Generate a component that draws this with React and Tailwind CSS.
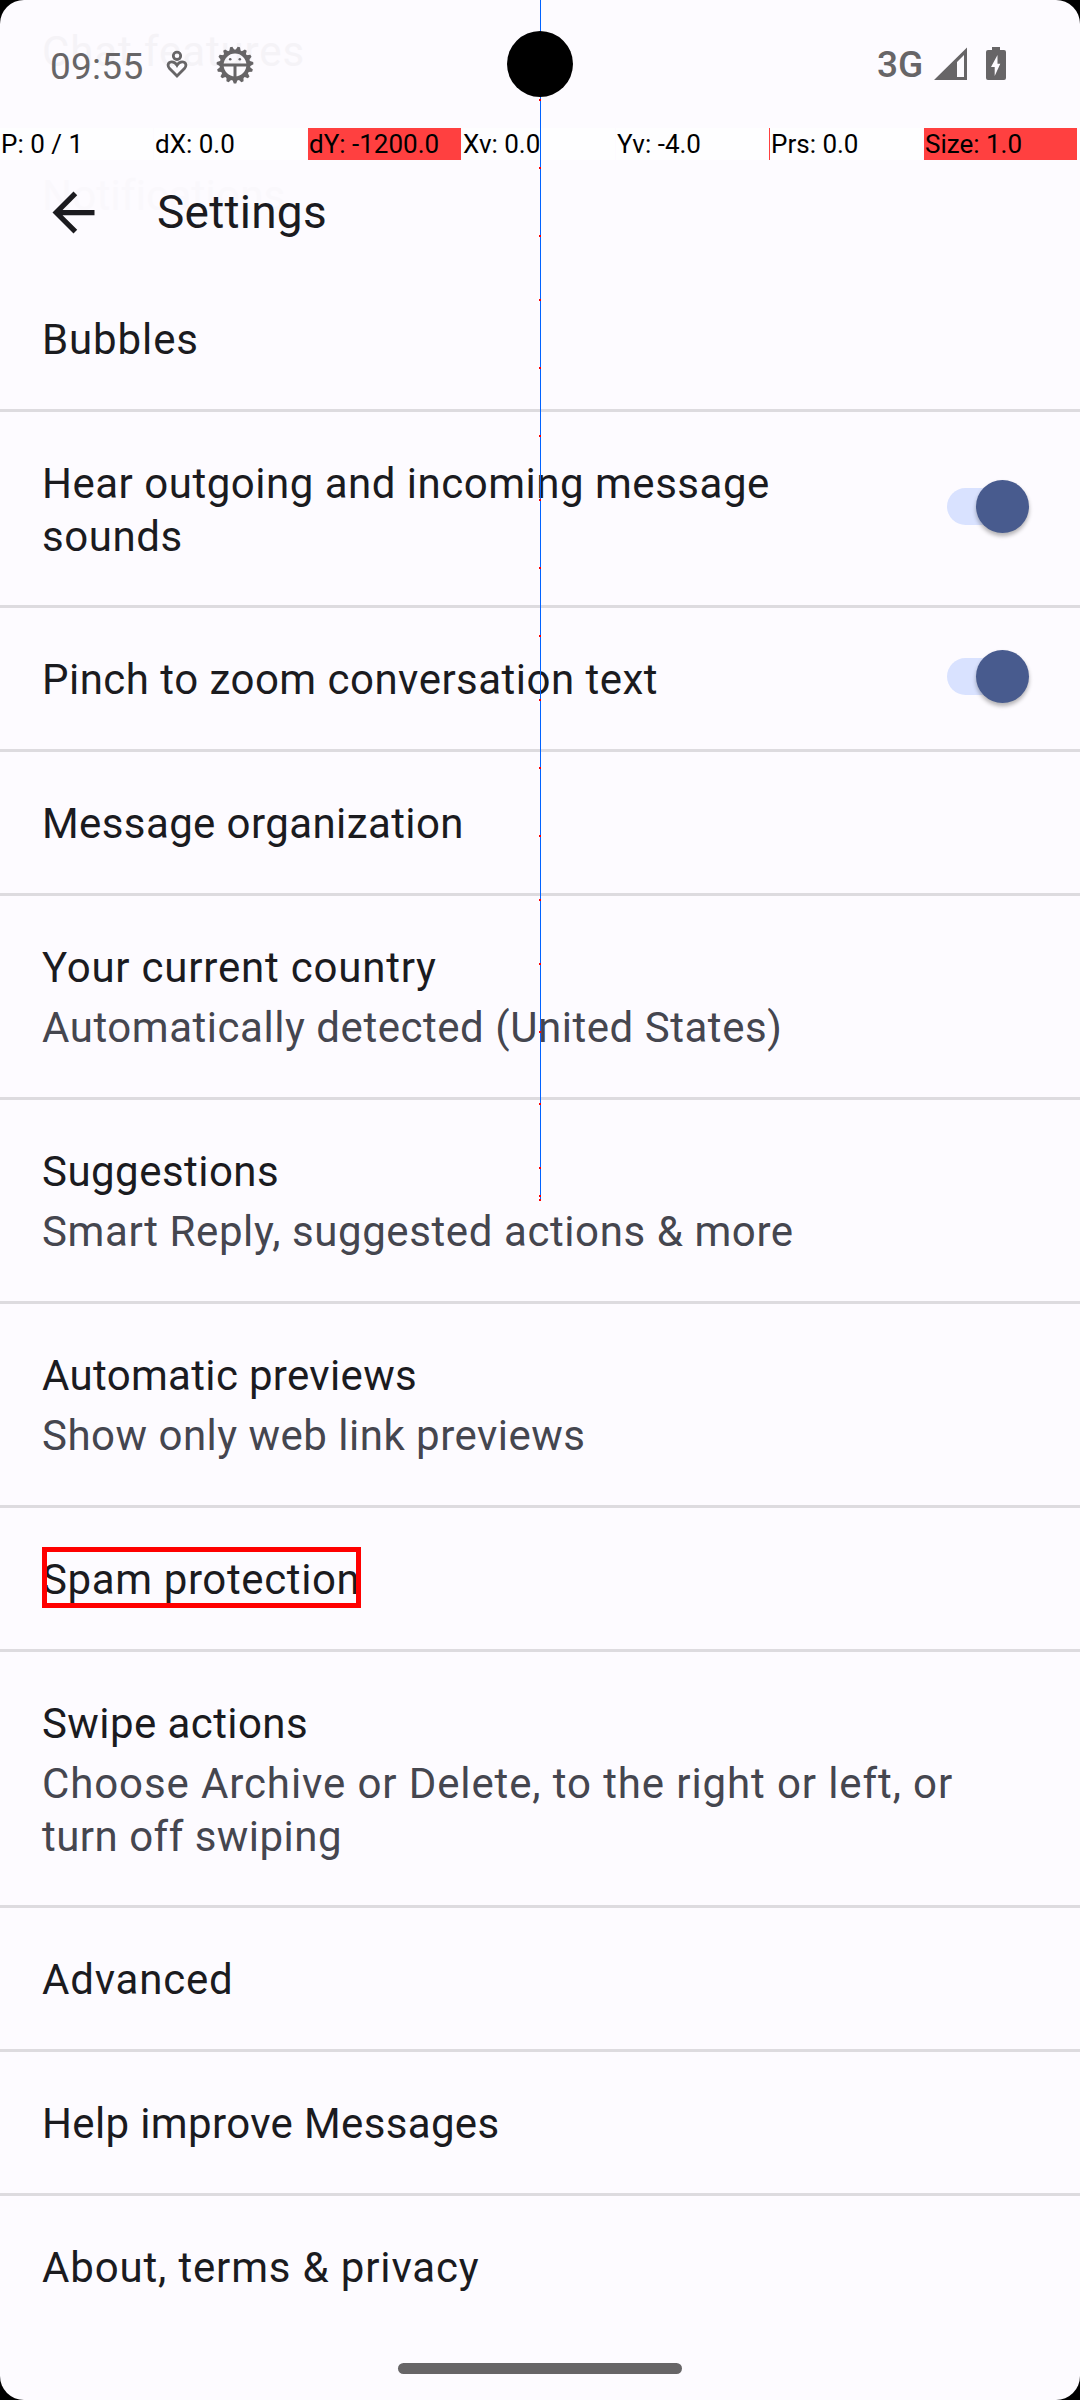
import React from "react";

const rows = [
  { lines: [["Bubbles", "tracking-[0.9px]"]], height: "h-[144px]" },
  {
    lines: [["Hear outgoing and incoming message", "tracking-[0.51px]"], ["sounds", "tracking-[0.57px]"]],
    height: "h-[196px]",
    toggle: "mt-[68px]",
  },
  { lines: [["Pinch to zoom conversation text", "tracking-[0.48px]"]], height: "h-[144px]", toggle: "mt-[42px]" },
  { lines: [["Message organization", "tracking-[0.4px]"]], height: "h-[144px]" },
  {
    lines: [["Your current country", "tracking-[0.79px]"]],
    sub: [["Automatically detected (United States)", "tracking-[0.54px]"]],
    height: "h-[204px]",
  },
  {
    lines: [["Suggestions", "tracking-[0.47px]"]],
    sub: [["Smart Reply, suggested actions & more", "tracking-[0.59px]"]],
    height: "h-[204px]",
  },
  {
    lines: [["Automatic previews", "tracking-[0.33px]"]],
    sub: [["Show only web link previews", "tracking-[0.49px]"]],
    height: "h-[204px]",
  },
  { lines: [["Spam protection", "tracking-[0.62px]"]], height: "h-[144px]", highlight: true },
  {
    lines: [["Swipe actions", "tracking-[0.42px]"]],
    sub: [
      ["Choose Archive or Delete, to the right or left, or", "tracking-[0.89px]"],
      ["turn off swiping", "tracking-[0.48px]"],
    ],
    height: "h-[256px]",
  },
  { lines: [["Advanced", "tracking-[0.8px]"]], height: "h-[144px]" },
  { lines: [["Help improve Messages", "tracking-[0.36px]"]], height: "h-[144px]" },
  { lines: [["About, terms & privacy", "tracking-[0.84px]"]], height: "h-[144px]", last: true },
];

const pointerCells = [
  { text: "P: 0 / 1" },
  { text: "dX: 0.0" },
  { text: "dY: -1200.0", active: true },
  { text: "Xv: 0.0" },
  { text: "Yv: -4.0" },
  { text: "Prs: 0.0", tick: true },
  { text: "Size: 1.0", active: true },
];

const samples = [100, 168, 236, 300, 368, 436, 500, 568, 636, 700, 768, 836, 900, 964, 1032, 1104, 1168, 1196, 1200];

function Switch({ className }) {
  return (
    <div className={`relative flex h-[53px] w-[83px] shrink-0 items-center ${className}`}>
      <div className="ml-px h-[37px] w-[80px] rounded-full bg-[#d9e2ff]" />
      <div className="absolute right-0 top-0 h-[53px] w-[53px] rounded-full bg-[#485b8e] shadow-[0_3px_4px_rgba(0,0,0,0.3)]" />
    </div>
  );
}

function SettingRow({ row }) {
  return (
    <div className={`relative flex justify-between pl-[42px] pr-[51px] ${row.height} ${row.last ? "" : "border-b-[3px] border-[#dddbdf]"}`}>
      <div className="whitespace-nowrap pt-[45px] text-[42px] leading-[53px]">
        {row.lines.map(([text, tracking]) => (
          <div key={text} className={`text-[#1b1b1f] ${tracking}`}>{text}</div>
        ))}
        {row.sub && (
          <div className="pt-[7px] text-[#45464f]">
            {row.sub.map(([text, tracking]) => (
              <div key={text} className={tracking}>{text}</div>
            ))}
          </div>
        )}
      </div>
      {row.toggle && <Switch className={row.toggle} />}
      {row.highlight && (
        <div className="absolute left-[42px] top-[39px] h-[61px] w-[319px] border-[5px] border-[#ff0000]" />
      )}
    </div>
  );
}

function HealthIcon() {
  return (
    <svg className="h-[30px] w-[22px]" viewBox="0 0 22 30" fill="none" stroke="#676567" strokeWidth="2.8">
      <circle cx="11" cy="6.8" r="3.7" />
      <path d="M11 27 L3.6 19.6 C0.6 16 2.6 12.9 5.8 12.9 C8.2 12.9 9.8 14.2 11 16.2 C12.2 14.2 13.8 12.9 16.2 12.9 C19.4 12.9 21.4 16 18.4 19.6 Z" />
    </svg>
  );
}

const teeth = Array.from({ length: 15 }, (_, i) => 12 + i * 24);

function BugIcon() {
  return (
    <svg className="h-[38px] w-[38px]" viewBox="-19 -19 38 38" fill="none" stroke="#676567">
      <circle r="13.4" strokeWidth="4" />
      <g fill="#676567" stroke="none">
        {teeth.map((a) => (
          <path key={a} d="M-2.7 -14.6 L-1.2 -18.4 H1.2 L2.7 -14.6Z" transform={`rotate(${a})`} />
        ))}
      </g>
      <path d="M-12 0H12M0 0V13" strokeWidth="3" />
      <g fill="#676567" stroke="none">
        <circle cx="-4.8" cy="-5.8" r="1.3" />
        <circle cx="4.8" cy="-5.8" r="1.3" />
      </g>
    </svg>
  );
}

function StatusBar() {
  return (
    <div className="relative flex h-[128px] items-start justify-between pl-[50px] pr-[74px] text-[#676567]">
      <div className="flex">
        <span className="mt-[45px] w-[115px] text-[37px] leading-[44px] tracking-[0.26px]">09:55</span>
        <span className="mt-[49px] w-[50px] pl-px"><HealthIcon /></span>
        <span className="mt-[46px] pl-px"><BugIcon /></span>
      </div>
      <div className="flex">
        <span className="mt-[43px] w-[57px] text-[37px] font-medium leading-[44px]">3G</span>
        <svg className="mt-[47px] h-[33px] w-[33px]" viewBox="0 0 33 33" fill="#676567">
          <path fillRule="evenodd" d="M33 0.5V33H0Z M30 8 L23 15V30H30Z" />
        </svg>
        <svg className="ml-[19px] mt-[47px] h-[33px] w-[20px]" viewBox="0 0 20 33" fill="#676567">
          <path fillRule="evenodd" d="M6 0H14V3H18Q20 3 20 5V31Q20 33 18 33H2Q0 33 0 31V5Q0 3 2 3H6Z M11.5 8 L5 20H8.7V29L14.3 16.7H11.5Z" />
        </svg>
      </div>
    </div>
  );
}

function PointerBar() {
  return (
    <div className="relative flex h-[32px] gap-px text-[26px] leading-[32px] text-black">
      {pointerCells.map((c) => (
        <div key={c.text} className={`relative w-[153px] whitespace-nowrap pl-px ${c.active ? "bg-[#ff4040]" : "bg-[#fefeff]"}`}>
          {c.text}
          {c.tick && <div className="absolute -left-px top-0 h-full w-px bg-[#ff4040]" />}
        </div>
      ))}
    </div>
  );
}

export default function App() {
  return (
    <div className="h-[2400px] w-[1080px] bg-black">
      <div className="relative h-[2400px] w-[1080px] overflow-hidden rounded-[24px] bg-[#fdfbff] font-['Roboto',sans-serif]">
        {/* list entries fading out beneath the header */}
        <div className="absolute left-[42px] top-[25px] whitespace-nowrap text-[42px] leading-[53px] tracking-[0.9px] text-[#f5f3f7]">Chat features</div>
        <div className="absolute left-[42px] top-[169px] whitespace-nowrap text-[42px] leading-[53px] tracking-[0.25px] text-[#faf8fc]">Notifications</div>

        <StatusBar />
        <PointerBar />

        <div className="relative flex h-[108px] items-start pl-[42px]">
          <svg className="mt-[21px] h-[63px] w-[63px]" viewBox="0 0 24 24" fill="#1b1b1f">
            <path d="M20 11H7.83l5.59-5.59L12 4l-8 8 8 8 1.41-1.41L7.83 13H20v-2z" />
          </svg>
          <h1 className="ml-[52px] mt-[24px] text-[46px] leading-[56px] tracking-[0.24px] text-[#1b1b1f]">Settings</h1>
        </div>

        {rows.map((row) => (
          <SettingRow key={row.lines[0][0]} row={row} />
        ))}

        <div className="mx-auto mt-[23px] h-[11px] w-[284px] rounded-full bg-[#676567]" />

        {/* pointer trail */}
        <div className="absolute left-[540px] top-0 h-[1200px] w-px bg-[#0062ff]" />
        {samples.map((y) => (
          <div key={y} className="absolute left-[539px] h-[2px] w-[2px] bg-[#ff0000]" style={{ top: y - 1 }} />
        ))}
        {/* camera cutout */}
        <div className="absolute left-[507px] top-[31px] h-[66px] w-[66px] rounded-full bg-black" />
      </div>
    </div>
  );
}
